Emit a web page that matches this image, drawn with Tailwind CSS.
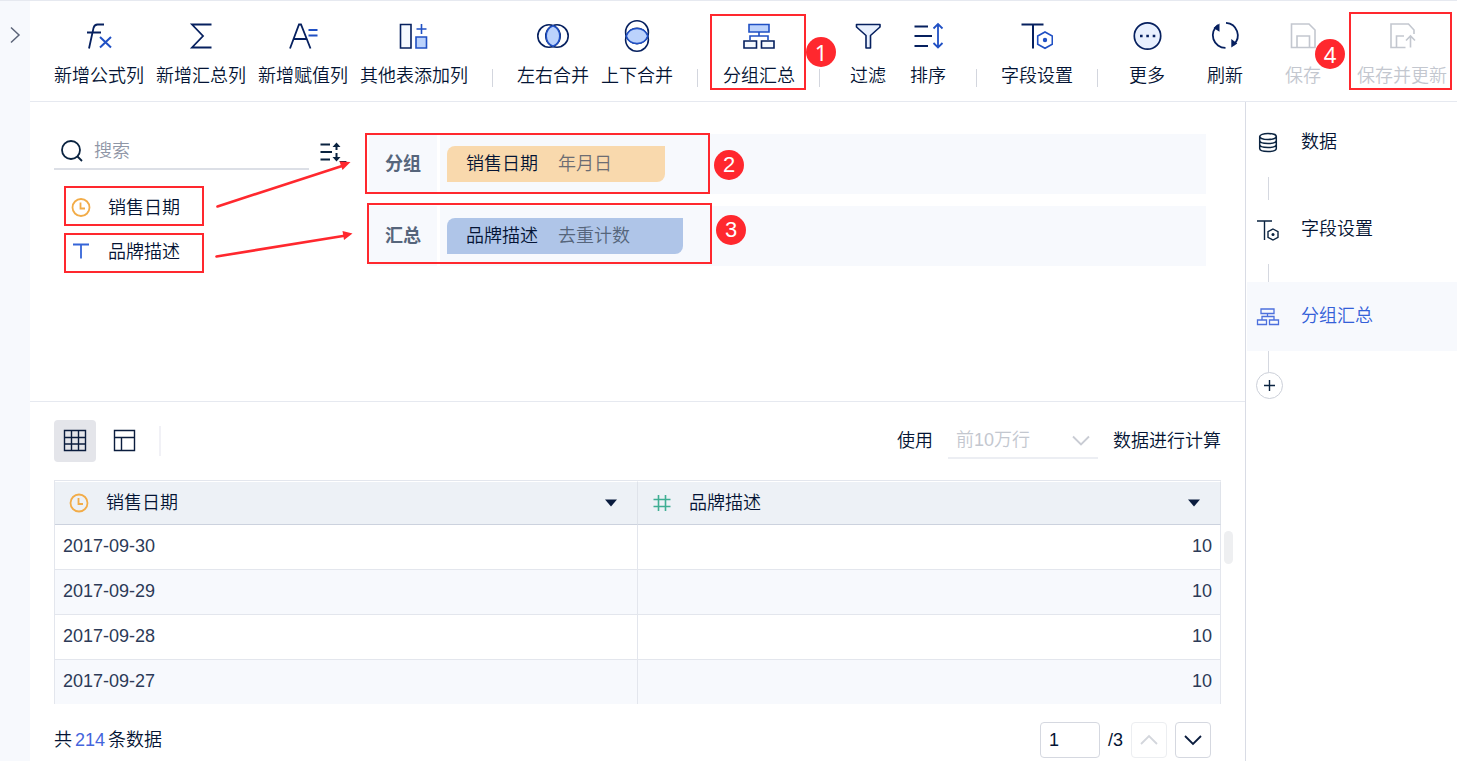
<!DOCTYPE html>
<html lang="zh-CN">
<head>
  <meta charset="UTF-8" />
  <meta name="viewport" content="width=device-width, initial-scale=1.0" />
  <title>分组汇总</title>
  <script src="https://cdn.jsdelivr.net/npm/@tailwindcss/browser@4"></script>
</head>
<body class="flex h-screen overflow-hidden bg-white font-['Liberation_Sans','Noto_Sans_CJK_SC',sans-serif] text-lg/6 font-[350] text-[#041434]">

  <!-- Collapsed left rail -->
  <aside class="w-[30px] shrink-0 border-t border-[#e6e9f0] bg-[#f7f9fd]">
    <button type="button" aria-label="展开" class="mt-6 ml-2 block">
      <svg class="h-5 w-4" viewBox="0 0 16 20" fill="none" stroke="#5b6478" stroke-width="1.5"><path d="M3 2.500l8 7.500-8 7.500" /></svg>
    </button>
  </aside>

  <div class="flex min-w-0 flex-1 flex-col">

    <!-- Toolbar -->
    <header class="h-[102px] shrink-0 border-y border-[#e6e9f0]">
      <nav class="flex gap-3 pt-[19px] pl-6 whitespace-nowrap">
        <button type="button" class="flex flex-col items-center gap-3">
          <svg class="size-8" viewBox="0 0 32 32" fill="none" stroke-width="1.8">
            <path stroke="#06205f" d="M6 28.500L10.500 8q1-3.500 4-3.500h6.500M4 12.500h14" />
            <path stroke="#2050c4" stroke-width="2" d="M17 17l11 10.500M28 17l-11 10.500" />
          </svg>
          <span>新增公式列</span>
        </button>
        <button type="button" class="flex flex-col items-center gap-3">
          <svg class="size-8" viewBox="0 0 32 32" fill="none" stroke="#06205f" stroke-width="1.8"><path d="M26.500 4.500H7L18 16 7 27.500h19.500" /></svg>
          <span>新增汇总列</span>
        </button>
        <button type="button" class="flex flex-col items-center gap-3">
          <svg class="size-8" viewBox="0 0 32 32" fill="none" stroke-width="1.800">
            <path stroke="#06205f" d="M3 28.500L12 4.500h2l9.500 24M6.500 19h13" />
            <path stroke="#2050c4" d="M21.500 10h9M21.500 15.500h9" />
          </svg>
          <span>新增赋值列</span>
        </button>
        <button type="button" class="flex flex-col items-center gap-3">
          <svg class="size-8" viewBox="0 0 32 32" stroke-width="1.600">
            <path fill="#f5f9ff" stroke="#06205f" d="M2.500 4.500h10.500v23.500H2.500z" />
            <path fill="#bbd2fc" stroke="#2050c4" d="M18 17h10.500v11h-10.500z" />
            <path fill="none" stroke="#2050c4" d="M23.500 4v10M18.500 9h10" />
          </svg>
          <span>其他表添加列</span>
        </button>
        <div class="mx-3 mt-[49px] h-[18px] w-px bg-[#d3d6de]"></div>
        <button type="button" class="flex flex-col items-center gap-3">
          <svg class="size-8" viewBox="0 0 32 32" fill="none" stroke="#06205f" stroke-width="1.600">
            <circle cx="12" cy="16" r="11.200" /><circle cx="20" cy="16" r="11.200" />
            <path fill="#bbd2fc" stroke="#2050c4" d="M16 5.700a11.200 11.200 0 0 1 0 20.600a11.200 11.200 0 0 1 0-20.600z" />
          </svg>
          <span>左右合并</span>
        </button>
        <button type="button" class="flex flex-col items-center gap-3">
          <svg class="size-8" viewBox="0 0 32 32" fill="none" stroke="#06205f" stroke-width="1.600">
            <circle cx="16" cy="12.200" r="11.400" /><circle cx="16" cy="19.800" r="11.400" />
            <path fill="#bbd2fc" stroke="#2050c4" d="M5.200 16a11.500 11.500 0 0 1 21.600 0a11.500 11.500 0 0 1-21.600 0z" />
          </svg>
          <span>上下合并</span>
        </button>
        <div class="mr-[13px] ml-3 mt-[49px] h-[18px] w-px bg-[#d3d6de]"></div>
        <button type="button" class="relative flex flex-col items-center gap-3">
          <svg class="size-8" viewBox="0 0 32 32" stroke-width="1.600">
            <path fill="#bbd2fc" stroke="#2050c4" d="M6 4.500h20v7.500H6z" />
            <path fill="none" stroke="#2050c4" d="M16 12v4M7 20v-4h18v4" />
            <path fill="#f5f9ff" stroke="#06205f" d="M1 21h12.500v7H1zM18.500 21H31v7H18.500z" />
          </svg>
          <span>分组汇总</span>
          <span class="absolute -top-1.5 -left-[13px] h-[76px] w-24 border-2 border-[#ff282e]"></span>
          <span class="absolute top-[17px] left-[83px] size-[30px] rounded-full bg-[#ff282e] text-center font-['Noto_Sans',sans-serif] text-[22px]/[30px] font-normal text-white">1</span>
        </button>
        <div class="mx-3 mt-[49px] h-[18px] w-px bg-[#d3d6de]"></div>
        <button type="button" class="flex w-12 flex-col items-center gap-3">
          <svg class="size-8" viewBox="0 0 32 32" fill="#e8f0fe" stroke="#06205f" stroke-width="1.600" stroke-linejoin="round"><path d="M4.500 4.500h23.500v2.500l-9.500 8.500v12.500h-4.500V15.500L4.500 7z" /></svg>
          <span>过滤</span>
        </button>
        <button type="button" class="flex w-12 flex-col items-center gap-3">
          <svg class="size-8" viewBox="0 0 32 32" fill="none" stroke-width="2">
            <path stroke="#06205f" d="M2.500 6.500H16M2.500 16h17.500M2.500 26H16" />
            <path stroke="#2050c4" stroke-width="1.800" d="M26 4v23.500M21.500 8.500L26 4l4.500 4.500M21.500 23l4.500 4.500 4.500-4.500" />
          </svg>
          <span>排序</span>
        </button>
        <div class="mx-3 mt-[49px] h-[18px] w-px bg-[#d3d6de]"></div>
        <button type="button" class="flex flex-col items-center gap-3">
          <svg class="size-8" viewBox="0 0 32 32" fill="none" stroke-width="2">
            <path stroke="#06205f" d="M.5 4.500h22M12 4.500v24" />
            <path stroke="#2050c4" stroke-width="1.600" d="M24 12l7.300 4v8.300L24 28.300l-7.300-4V16z" />
            <circle cx="24" cy="20" r="2.200" fill="#2050c4" />
          </svg>
          <span>字段设置</span>
        </button>
        <div class="mr-[13px] ml-3 mt-[49px] h-[18px] w-px bg-[#d3d6de]"></div>
        <div class="flex gap-[30px]">
          <button type="button" class="flex w-12 flex-col items-center gap-3">
            <svg class="size-8" viewBox="0 0 32 32">
              <circle cx="16.500" cy="16" r="13.200" fill="#e8f0fe" stroke="#06205f" stroke-width="1.700" />
              <path fill="#06205f" d="M9 14.800h2.600v2.400H9zM15.300 14.800h2.600v2.400h-2.600zM21.700 14.800h2.600v2.400h-2.600z" />
            </svg>
            <span>更多</span>
          </button>
          <button type="button" class="flex w-12 flex-col items-center gap-3">
            <svg class="size-8" viewBox="0 0 32 32" fill="none" stroke="#06205f" stroke-width="1.800">
              <path d="M9 5a12.600 12.600 0 0 0 7.500 22.800M17 2.800a12.600 12.600 0 0 1 7.500 22" />
              <path fill="#06205f" stroke="none" d="M10.500 3.500v8.200l-6-3.700zM22.300 19v8.500l6-4z" />
            </svg>
            <span>刷新</span>
          </button>
          <button type="button" disabled class="relative flex w-12 flex-col items-center gap-3 text-[#c3c7cf]">
            <svg class="size-8" viewBox="0 0 32 32" fill="none" stroke="currentColor" stroke-width="1.600">
              <path d="M4.500 4h17.500l6 6v17.500H4.500zM10 27.500v-11.500h12.500v11.500" />
            </svg>
            <span>保存</span>
            <span class="absolute top-[19px] left-9 size-[30px] rounded-full bg-[#ff282e] text-center font-['Noto_Sans',sans-serif] text-[22px]/[30px] font-normal text-white">4</span>
          </button>
          <button type="button" disabled class="relative flex flex-col items-center gap-3 text-[#c3c7cf]">
            <svg class="size-8" viewBox="0 0 32 32" fill="none" stroke="currentColor" stroke-width="1.600">
              <path d="M19.500 27.500H5V4h17.500l5.500 6v4M10.500 27.500v-11.500H18M24.500 27.500v-11M20 20.500l4.500-4.500 4.500 4.500" />
            </svg>
            <span>保存并更新</span>
            <span class="absolute -top-2 -left-2 h-[78px] w-[103px] border-2 border-[#ff282e]"></span>
          </button>
        </div>
      </nav>
    </header>

    <div class="flex min-h-0 flex-1">
      <main class="flex min-w-0 flex-1 flex-col">

        <!-- Grouping configuration -->
        <section class="relative flex h-[300px] shrink-0 border-b border-[#e6e9f0] pt-8 pr-[39px] pl-6">
          <div class="w-[315px] shrink-0">
            <div class="flex">
              <label class="flex h-9 w-[255px] items-center gap-2.5 border-b-2 border-[#dcdfe6] pl-1.5">
                <svg class="size-6 shrink-0" viewBox="0 0 24 24" fill="none" stroke="#0a2340" stroke-width="1.800"><circle cx="11" cy="11" r="9" /><path d="M17.500 17.500l4.500 4.500" /></svg>
                <input type="text" placeholder="搜索" aria-label="搜索" class="w-40 placeholder-[#8f96a6] outline-none" />
              </label>
              <button type="button" aria-label="排序" class="ml-2.5">
                <svg class="h-6 w-7" viewBox="0 0 28 24" fill="none" stroke="#0a2340" stroke-width="2">
                  <path d="M1.500 4.500H11M1.500 12H13M1.500 19.500H11M17.500 4v6M17.500 13v7" />
                  <path fill="#0a2340" stroke="none" d="M13.500 7l4-4.500 4 4.500zM13.500 17l4 4.500 4-4.500zM20 21h8l-4 3.500z" />
                </svg>
              </button>
            </div>
            <ul class="mt-4 ml-2.5 w-[140px]">
              <li class="relative flex h-11 items-center gap-[17px] pl-[7px]">
                <svg class="size-5" viewBox="0 0 20 20" fill="none" stroke="#f2ac48" stroke-width="1.800"><circle cx="10" cy="9.500" r="8.500" /><path d="M9.500 4.500v6H14" /></svg>
                <span>销售日期</span>
                <span class="absolute inset-x-0 top-0 h-10 border-2 border-[#ff282e]"></span>
              </li>
              <li class="relative flex h-11 items-center gap-[17px] pl-[7px]">
                <svg class="size-5" viewBox="0 0 20 20" fill="none" stroke="#3564d8" stroke-width="1.800"><path d="M2 2.500h16M10 2.500v14" /></svg>
                <span>品牌描述</span>
                <span class="absolute inset-x-0 top-[3px] h-10 border-2 border-[#ff282e]"></span>
              </li>
            </ul>
          </div>

          <div class="flex flex-1 flex-col gap-3">
            <div class="relative flex h-[60px] gap-[3px]">
              <h2 class="flex w-[68px] items-center justify-center bg-[#f7f9fd] font-bold text-[#56657b]">分组</h2>
              <div class="flex flex-1 items-center bg-[#f7f9fd] pl-[7px]">
                <div class="flex h-9 items-center gap-5 rounded-tl-lg rounded-br-lg bg-[#f9d9ad] pr-[53px] pl-[19px]">
                  <span>销售日期</span><span class="text-[#6c6c72]">年月日</span>
                </div>
              </div>
              <span class="absolute -top-px -left-1 h-[61px] w-[345px] border-2 border-[#ff282e]"></span>
              <span class="absolute top-4 left-[345px] size-[30px] rounded-full bg-[#ff282e] text-center text-[22px]/[30px] font-normal text-white">2</span>
            </div>
            <div class="relative flex h-[60px] gap-[3px]">
              <h2 class="flex w-[68px] items-center justify-center bg-[#f7f9fd] font-bold text-[#56657b]">汇总</h2>
              <div class="flex flex-1 items-center bg-[#f7f9fd] pl-[7px]">
                <div class="flex h-9 items-center gap-5 rounded-tl-lg rounded-br-lg bg-[#afc5e8] pr-[53px] pl-[19px]">
                  <span>品牌描述</span><span class="text-[#56657b]">去重计数</span>
                </div>
              </div>
              <span class="absolute -top-[3px] -left-0.5 h-[61px] w-[345px] border-2 border-[#ff282e]"></span>
              <span class="absolute top-[9px] left-[347px] size-[30px] rounded-full bg-[#ff282e] text-center text-[22px]/[30px] font-normal text-white">3</span>
            </div>
          </div>

          <!-- Arrows from the fields to their drop zones -->
          <svg class="pointer-events-none absolute top-[50px] left-[180px] h-[120px] w-[150px]" viewBox="0 0 150 120" fill="#ff282e" stroke="#ff282e" stroke-width="2.600" stroke-linecap="round">
            <path d="M7.500 54.500L132 14M6.500 104.500L133 84" />
            <path stroke="none" d="M140.500 10l-8 8-3-8.500zM142.500 81.500l-8.500 6.500-1.500-9z" />
          </svg>
        </section>

        <!-- Preview -->
        <section class="pr-6 pl-6">
          <div class="flex h-[78px] items-center">
            <button type="button" aria-label="表格" class="flex size-[42px] items-center justify-center rounded bg-[#e4e5ea]">
              <svg class="size-6" viewBox="0 0 24 24" fill="none" stroke="#0a1c3e" stroke-width="1.400"><path d="M1.500 1.500h21v20h-21zM1.500 8.500h21M1.500 15h21M8.500 1.500v20M15.500 1.500v20" /></svg>
            </button>
            <button type="button" aria-label="布局" class="ml-2 flex size-[42px] items-center justify-center rounded">
              <svg class="size-6" viewBox="0 0 24 24" fill="none" stroke="#0a1c3e" stroke-width="1.400"><path d="M1.500 1.500h20v20h-20zM1.500 8.500h20M8.500 8.500v13" /></svg>
            </button>
            <div class="ml-[13px] h-[30px] w-0.5 bg-[#f1f1f6]"></div>
            <label for="rows" class="ml-auto">使用</label>
            <div class="relative mx-[15px] w-[150px]">
              <select id="rows" disabled class="h-9 w-full appearance-none border-b-2 border-[#eceef3] pl-2 text-[#c3c7cf] opacity-100">
                <option>前10万行</option>
              </select>
              <svg class="absolute top-2.5 right-2 h-4 w-[18px]" viewBox="0 0 18 16" fill="none" stroke="#c9ccd4" stroke-width="1.800"><path d="M1 3.500l8 8 8-8" /></svg>
            </div>
            <span>数据进行计算</span>
          </div>

          <div class="relative">
            <table class="w-full table-fixed border-separate border-spacing-0 border-t border-l border-[#e3e6ed] text-left">
              <thead>
                <tr class="h-11">
                  <th class="border-t border-r border-b border-t-white border-r-[#dfe3ea] border-b-[#ccd2de] bg-[#edf1f6] p-0 font-[350]">
                    <div class="flex items-center pr-5 pl-3.5">
                      <svg class="mr-[17px] size-5" viewBox="0 0 20 20" fill="none" stroke="#f2ac48" stroke-width="1.800"><circle cx="10" cy="10" r="8.500" /><path d="M9.500 5v6H14" /></svg>
                      销售日期
                      <svg class="ml-auto h-2 w-3" viewBox="0 0 12 8" fill="#0a1c3e"><path d="M0 .5h12L6 7.500z" /></svg>
                    </div>
                  </th>
                  <th class="border-t border-r border-b border-t-white border-r-[#dfe3ea] border-b-[#ccd2de] bg-[#edf1f6] p-0 font-[350]">
                    <div class="flex items-center pr-5 pl-3.5">
                      <svg class="mr-[17px] size-5" viewBox="0 0 20 20" fill="none" stroke="#3fae93" stroke-width="1.600"><path d="M6.500 2v16M13.500 2v16M1.500 6.500h17M1.500 13.500h17" /></svg>
                      品牌描述
                      <svg class="ml-auto h-2 w-3" viewBox="0 0 12 8" fill="#0a1c3e"><path d="M0 .5h12L6 7.500z" /></svg>
                    </div>
                  </th>
                </tr>
              </thead>
              <tbody class="text-[#2c3a57]">
                <tr class="h-[45px]">
                  <td class="border-r border-b border-[#e3e6ed] px-2 pt-0 pb-0.5">2017-09-30</td>
                  <td class="border-r border-b border-[#e3e6ed] px-2 pt-0 pb-0.5 text-right">10</td>
                </tr>
                <tr class="h-[45px] bg-[#f7f9fd]">
                  <td class="border-r border-b border-[#e3e6ed] px-2 pt-0 pb-0.5">2017-09-29</td>
                  <td class="border-r border-b border-[#e3e6ed] px-2 pt-0 pb-0.5 text-right">10</td>
                </tr>
                <tr class="h-[45px]">
                  <td class="border-r border-b border-[#e3e6ed] px-2 pt-0 pb-0.5">2017-09-28</td>
                  <td class="border-r border-b border-[#e3e6ed] px-2 pt-0 pb-0.5 text-right">10</td>
                </tr>
                <tr class="h-11 bg-[#f7f9fd]">
                  <td class="border-r border-[#e3e6ed] px-2 pt-0 pb-0.5">2017-09-27</td>
                  <td class="border-r border-[#e3e6ed] px-2 pt-0 pb-0.5 text-right">10</td>
                </tr>
              </tbody>
            </table>
            <!-- Scrollbar thumb -->
            <div class="absolute top-[51px] -right-3 h-[33px] w-[9px] rounded-full bg-[#eeeff1]"></div>
          </div>

          <footer class="mt-[18px] flex h-9 items-center gap-2 pr-2.5">
            <p class="mr-auto">共<span class="mx-[3px] text-[#4465dc]">214</span>条数据</p>
            <input type="text" value="1" aria-label="页码" class="h-9 w-[60px] rounded-sm border border-[#d5d8e0] px-2 outline-none" />
            <span>/3</span>
            <button type="button" disabled aria-label="上一页" class="flex size-9 items-center justify-center rounded-sm border border-[#eceef1]">
              <svg class="h-4 w-[18px]" viewBox="0 0 18 16" fill="none" stroke="#d3d6dc" stroke-width="1.800"><path d="M1 12l8-8 8 8" /></svg>
            </button>
            <button type="button" aria-label="下一页" class="flex size-9 items-center justify-center rounded-sm border border-[#d5d8e0]">
              <svg class="h-4 w-[18px]" viewBox="0 0 18 16" fill="none" stroke="#0a1c3e" stroke-width="1.800"><path d="M1 4l8 8 8-8" /></svg>
            </button>
          </footer>
        </section>
      </main>

      <!-- Steps -->
      <aside class="w-[212px] shrink-0 border-l border-[#d9dce5] pt-1.5 pl-px">
        <a href="#" class="flex h-[69px] items-center gap-5 pb-px pl-2">
          <svg class="h-6 w-[26px]" viewBox="0 0 26 24" fill="none" stroke="#0a2340" stroke-width="1.500"><ellipse cx="13" cy="6.500" rx="8.300" ry="3" /><path d="M4.700 6.500v12c0 4 16.600 4 16.600 0v-12M4.700 10.500c0 4 16.600 4 16.600 0M4.700 14.500c0 4 16.600 4 16.600 0" /></svg>
          数据
        </a>
        <div class="-mb-[5px] ml-[21px] h-[23px] w-px bg-[#d5d8e0]"></div>
        <a href="#" class="flex h-[69px] items-center gap-5 pb-px pl-2">
          <svg class="h-6 w-[26px]" viewBox="0 0 26 24" fill="none" stroke="#0a2340" stroke-width="1.400"><path d="M2 4h15M9.500 4v19M18 12l5 2.700v5.600L18 23l-5-2.700v-5.600z" /><circle cx="18" cy="17.500" r="1.500" fill="#0a2340" stroke="none" /></svg>
          字段设置
        </a>
        <div class="ml-[21px] h-[18px] w-px bg-[#d5d8e0]"></div>
        <a href="#" class="flex h-[69px] items-center gap-5 bg-[#f7f9fd] pb-px pl-2 text-[#3460d8]">
          <svg class="h-6 w-[26px]" viewBox="0 0 26 24" fill="none" stroke="#4d70dd" stroke-width="1.300"><path d="M6 5h13v4.500H6zM12.500 9.500V12M7 16v-3.500h12V16M2.500 16h9v4.500h-9zM14.500 16h9v4.500h-9z" /></svg>
          分组汇总
        </a>
        <div class="ml-[21px] h-[21px] w-px bg-[#d5d8e0]"></div>
        <button type="button" aria-label="添加步骤" class="ml-[9px] flex size-[27px] items-center justify-center rounded-full border border-[#ccd0d9]">
          <svg class="size-[13px]" viewBox="0 0 13 13" stroke="#0a2340" stroke-width="1.400"><path d="M6.500 1v11M1 6.500h11" /></svg>
        </button>
      </aside>
    </div>
  </div>

</body>
</html>
